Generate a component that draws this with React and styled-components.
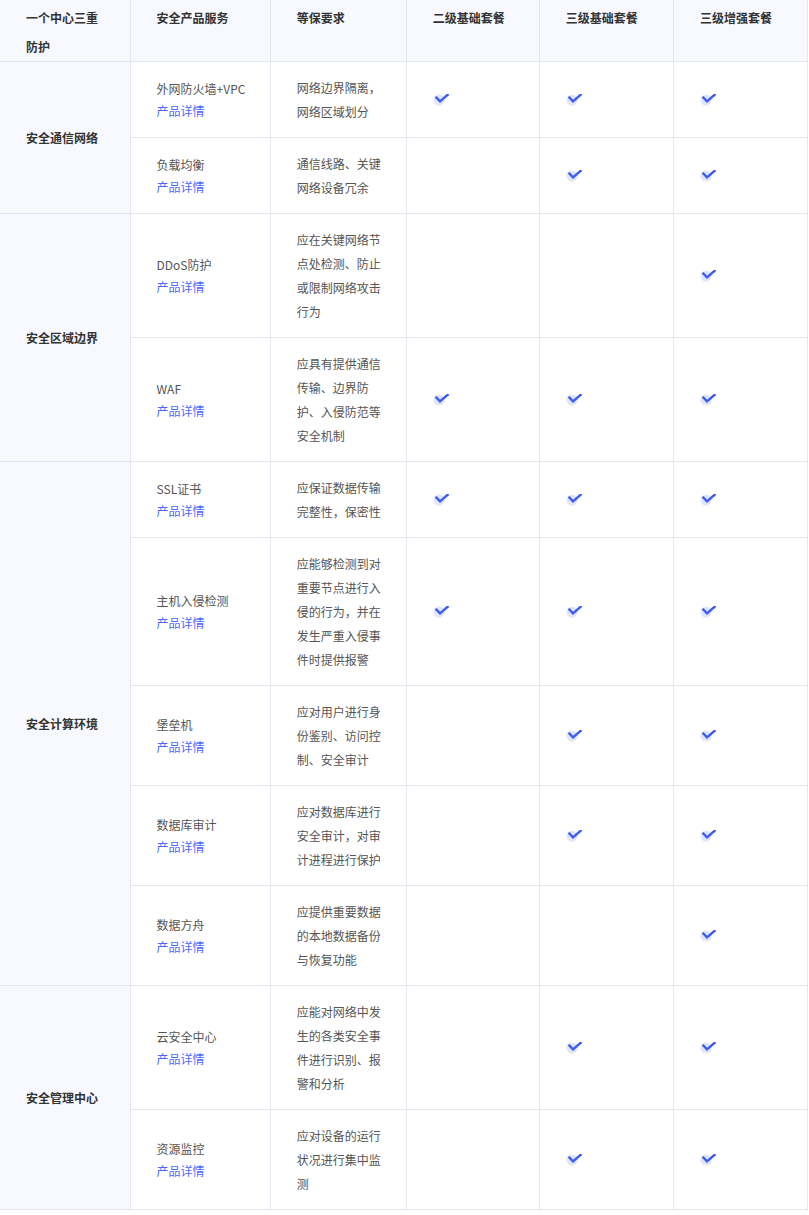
import React from "react";
import styled, { createGlobalStyle } from "styled-components";

const GlobalStyle = createGlobalStyle`
  body {
    margin: 0;
    background: #fff;
    font-family: "Noto Sans CJK SC", "Noto Sans", sans-serif;
  }
`;

const Table = styled.table`
  width: 808px;
  table-layout: fixed;
  border-collapse: collapse;
  font-size: 12px;
  color: #555;
`;

const HeadCell = styled.th`
  background: #f7f9ff;
  border: 1px solid #e4e7f0;
  border-left: ${(p) => (p.first ? "none" : "1px solid #e4e7f0")};
  border-top: none;
  padding: 3px 26px 0;
  line-height: 29px;
  height: 58px;
  text-align: left;
  vertical-align: top;
  font-weight: 700;
  color: #333;
`;

const GroupCell = styled.td`
  background: #f7f9ff;
  border: 1px solid #e4e7f0;
  border-left: none;
  padding: 0 26px;
  vertical-align: middle;
  font-weight: 700;
  color: #333;
`;

const Cell = styled.td`
  border: 1px solid #e4e7f0;
  padding: 14px 26px 13px;
  line-height: 24px;
  vertical-align: middle;
  white-space: nowrap;
`;

const ProductName = styled.div`
  line-height: 22px;
  color: #555;
`;

const DetailLink = styled.a`
  display: block;
  line-height: 22px;
  color: #4b69ff;
  text-decoration: none;
  cursor: pointer;
`;

const Line = styled.div`
  line-height: 24px;
`;

const CheckIcon = () => (
  <svg width="16" height="12" viewBox="0 0 16 12" style={{ display: "block" }}>
    <circle cx="6" cy="6" r="5.5" fill="#dfe5fb" />
    <path
      d="M3.4 3.6 L7 7.4 L14.6 0.8"
      fill="none"
      stroke="#3d5cf5"
      strokeWidth="2.4"
      strokeLinecap="square"
      strokeLinejoin="miter"
    />
  </svg>
);

const groups = [
  {
    name: "安全通信网络",
    items: [
      { product: "外网防火墙+VPC", req: ["网络边界隔离，", "网络区域划分"], checks: [1, 1, 1] },
      { product: "负载均衡", req: ["通信线路、关键", "网络设备冗余"], checks: [0, 1, 1] },
    ],
  },
  {
    name: "安全区域边界",
    items: [
      {
        product: "DDoS防护",
        req: ["应在关键网络节", "点处检测、防止", "或限制网络攻击", "行为"],
        checks: [0, 0, 1],
      },
      {
        product: "WAF",
        req: ["应具有提供通信", "传输、边界防", "护、入侵防范等", "安全机制"],
        checks: [1, 1, 1],
      },
    ],
  },
  {
    name: "安全计算环境",
    items: [
      { product: "SSL证书", req: ["应保证数据传输", "完整性，保密性"], checks: [1, 1, 1] },
      {
        product: "主机入侵检测",
        req: ["应能够检测到对", "重要节点进行入", "侵的行为，并在", "发生严重入侵事", "件时提供报警"],
        checks: [1, 1, 1],
      },
      { product: "堡垒机", req: ["应对用户进行身", "份鉴别、访问控", "制、安全审计"], checks: [0, 1, 1] },
      { product: "数据库审计", req: ["应对数据库进行", "安全审计，对审", "计进程进行保护"], checks: [0, 1, 1] },
      { product: "数据方舟", req: ["应提供重要数据", "的本地数据备份", "与恢复功能"], checks: [0, 0, 1] },
    ],
  },
  {
    name: "安全管理中心",
    items: [
      {
        product: "云安全中心",
        req: ["应能对网络中发", "生的各类安全事", "件进行识别、报", "警和分析"],
        checks: [0, 1, 1],
      },
      { product: "资源监控", req: ["应对设备的运行", "状况进行集中监", "测"], checks: [0, 1, 1] },
    ],
  },
];

const App = () => {
  const renderRows = () =>
    groups.map((group) =>
      group.items.map((item, index) => (
        <tr key={group.name + item.product}>
          {index === 0 && <GroupCell rowSpan={group.items.length}>{group.name}</GroupCell>}
          <Cell>
            <ProductName>{item.product}</ProductName>
            <DetailLink>产品详情</DetailLink>
          </Cell>
          <Cell>
            {item.req.map((line) => (
              <Line key={line}>{line}</Line>
            ))}
          </Cell>
          {item.checks.map((on, i) => (
            <Cell key={i}>{on ? <CheckIcon /> : null}</Cell>
          ))}
        </tr>
      ))
    );

  return (
    <>
      <GlobalStyle />
      <Table>
        <colgroup>
          <col style={{ width: 130 }} />
          <col style={{ width: 140 }} />
          <col style={{ width: 136 }} />
          <col style={{ width: 133 }} />
          <col style={{ width: 134 }} />
          <col style={{ width: 134 }} />
        </colgroup>
        <thead>
          <tr>
            <HeadCell first>一个中心三重防护</HeadCell>
            <HeadCell>安全产品服务</HeadCell>
            <HeadCell>等保要求</HeadCell>
            <HeadCell>二级基础套餐</HeadCell>
            <HeadCell>三级基础套餐</HeadCell>
            <HeadCell>三级增强套餐</HeadCell>
          </tr>
        </thead>
        <tbody>{renderRows()}</tbody>
      </Table>
    </>
  );
};

export default App;
